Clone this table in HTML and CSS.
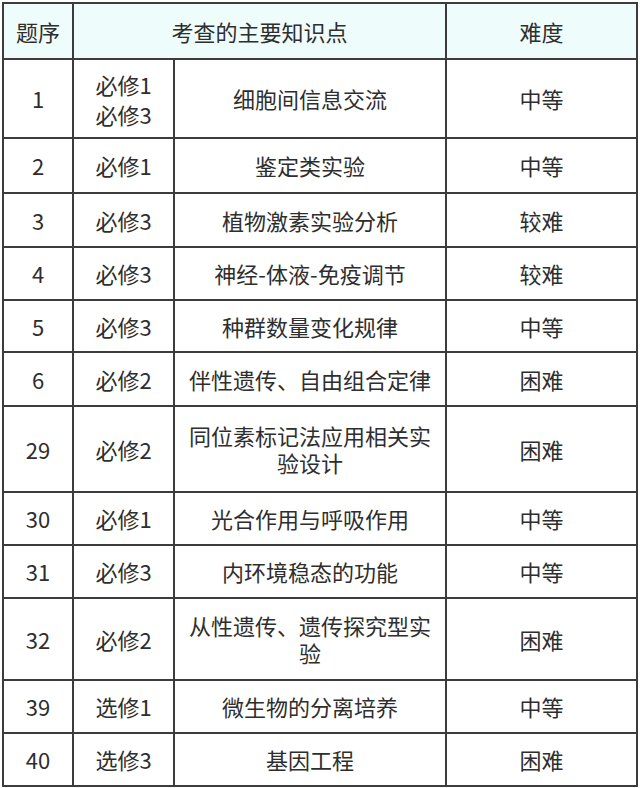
FILE: index.html
```html
<!DOCTYPE html>
<html lang="zh">
<head>
<meta charset="utf-8">
<link rel="stylesheet" href="styles.css">
</head>
<body>
<table class="tbl">
  <colgroup>
    <col class="c1"><col class="c2"><col class="c3"><col class="c4">
  </colgroup>
  <thead>
    <tr class="hd"><th>题序</th><th colspan="2">考查的主要知识点</th><th>难度</th></tr>
  </thead>
  <tbody>
    <tr class="r79"><td>1</td><td><div class="two">必修1</div><div class="two">必修3</div></td><td>细胞间信息交流</td><td>中等</td></tr>
    <tr class="r55"><td>2</td><td>必修1</td><td>鉴定类实验</td><td>中等</td></tr>
    <tr class="r54"><td>3</td><td>必修3</td><td>植物激素实验分析</td><td>较难</td></tr>
    <tr class="r53"><td>4</td><td>必修3</td><td>神经-体液-免疫调节</td><td>较难</td></tr>
    <tr class="r52"><td>5</td><td>必修3</td><td>种群数量变化规律</td><td>中等</td></tr>
    <tr class="r54"><td>6</td><td>必修2</td><td>伴性遗传、自由组合定律</td><td>困难</td></tr>
    <tr class="r86"><td>29</td><td>必修2</td><td class="wrap">同位素标记法应用相关实验设计</td><td>困难</td></tr>
    <tr class="r53"><td>30</td><td>必修1</td><td>光合作用与呼吸作用</td><td>中等</td></tr>
    <tr class="r53"><td>31</td><td>必修3</td><td>内环境稳态的功能</td><td>中等</td></tr>
    <tr class="r82"><td>32</td><td>必修2</td><td class="wrap">从性遗传、遗传探究型实验</td><td>困难</td></tr>
    <tr class="r53"><td>39</td><td>选修1</td><td>微生物的分离培养</td><td>中等</td></tr>
    <tr class="r53"><td>40</td><td>选修3</td><td>基因工程</td><td>困难</td></tr>
  </tbody>
</table>
</body>
</html>
```
FILE: styles.css
```css
html, body {
  margin: 0;
  padding: 0;
  background: #ffffff;
}
body {
  padding: 2px 0 0 2px;
  font-family: "Noto Sans CJK SC", "Noto Sans", sans-serif;
  color: #2e2e2e;
}
.tbl {
  border-collapse: collapse;
  table-layout: fixed;
  width: 635px;
  font-size: 22px;
}
.c1 { width: 70px; }
.c2 { width: 101px; }
.c3 { width: 272px; }
.c4 { width: 191px; }
.tbl th, .tbl td {
  border: 2px solid #3c3c3c;
  text-align: center;
  vertical-align: middle;
  padding: 0 6px;
  font-weight: normal;
  line-height: 27px;
}
.hd th {
  background: #eefcfc;
  height: 54px;
}
.two { line-height: 30px; }
.wrap { padding: 0 10px; }
.r79 td { height: 77px; }
.r55 td { height: 53px; }
.r54 td { height: 52px; }
.r53 td { height: 51px; }
.r52 td { height: 50px; }
.r86 td { height: 84px; }
.r82 td { height: 80px; }
```
